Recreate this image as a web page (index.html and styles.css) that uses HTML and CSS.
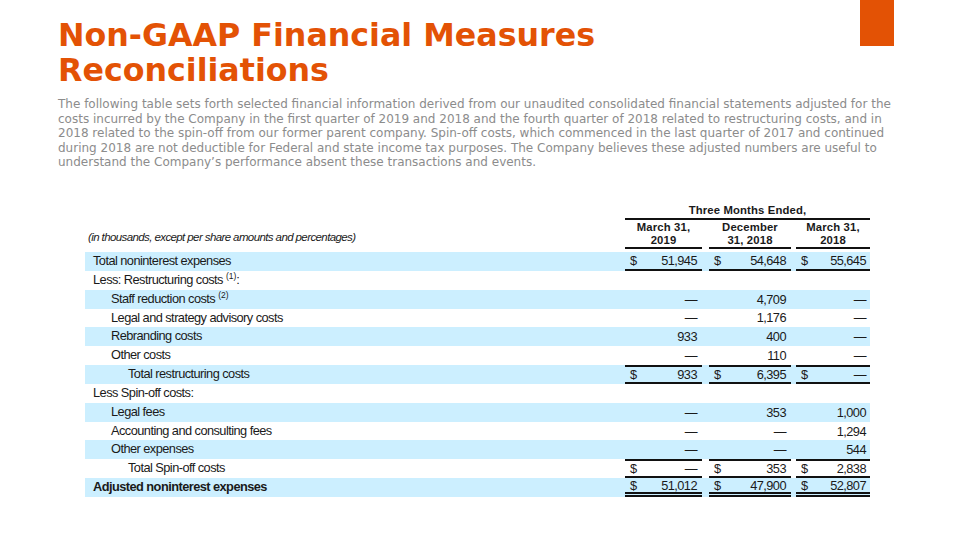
FILE: index.html
```html
<!DOCTYPE html>
<html lang="en">
<head>
<meta charset="utf-8">
<title>Non-GAAP Financial Measures Reconciliations</title>
<link rel="stylesheet" href="styles.css">
</head>
<body>
<div class="slide">
  <div class="accent"></div>
  <h1 class="title">Non-GAAP Financial Measures<br>Reconciliations</h1>
  <p class="intro">The following table sets forth selected financial information derived from our unaudited consolidated financial statements adjusted for the costs incurred by the Company in the first quarter of 2019 and 2018 and the fourth quarter of 2018 related to restructuring costs, and in 2018 related to the spin-off from our former parent company. Spin-off costs, which commenced in the last quarter of 2017 and continued during 2018 are not deductible for Federal and state income tax purposes. The Company believes these adjusted numbers are useful to understand the Company’s performance absent these transactions and events.</p>

  <div class="fin">
    <div class="head">
      <div class="units">(in thousands, except per share amounts and percentages)</div>
      <div class="period">
        <div class="period-title">Three Months Ended,</div>
        <div class="period-cols">
          <div class="ph c1">March 31,<br>2019</div>
          <div class="ph c2">December<br>31, 2018</div>
          <div class="ph c3">March 31,<br>2018</div>
        </div>
      </div>
    </div>

    <div class="row shade">
      <div class="lbl">Total noninterest expenses</div>
      <div class="val c1 bb"><span class="cur">$</span>51,945</div>
      <div class="val c2 bb"><span class="cur">$</span>54,648</div>
      <div class="val c3 bb"><span class="cur">$</span>55,645</div>
    </div>
    <div class="row">
      <div class="lbl">Less: Restructuring costs <sup>(1)</sup>:</div>
      <div class="val c1"></div><div class="val c2"></div><div class="val c3"></div>
    </div>
    <div class="row shade">
      <div class="lbl in1">Staff reduction costs <sup>(2)</sup></div>
      <div class="val c1">—</div>
      <div class="val c2">4,709</div>
      <div class="val c3">—</div>
    </div>
    <div class="row">
      <div class="lbl in1">Legal and strategy advisory costs</div>
      <div class="val c1">—</div>
      <div class="val c2">1,176</div>
      <div class="val c3">—</div>
    </div>
    <div class="row shade">
      <div class="lbl in1">Rebranding costs</div>
      <div class="val c1">933</div>
      <div class="val c2">400</div>
      <div class="val c3">—</div>
    </div>
    <div class="row">
      <div class="lbl in1">Other costs</div>
      <div class="val c1">—</div>
      <div class="val c2">110</div>
      <div class="val c3">—</div>
    </div>
    <div class="row shade">
      <div class="lbl in2">Total restructuring costs</div>
      <div class="val c1 bt bb"><span class="cur">$</span>933</div>
      <div class="val c2 bt bb"><span class="cur">$</span>6,395</div>
      <div class="val c3 bt bb"><span class="cur">$</span>—</div>
    </div>
    <div class="row">
      <div class="lbl">Less Spin-off costs:</div>
      <div class="val c1"></div><div class="val c2"></div><div class="val c3"></div>
    </div>
    <div class="row shade">
      <div class="lbl in1">Legal fees</div>
      <div class="val c1">—</div>
      <div class="val c2">353</div>
      <div class="val c3">1,000</div>
    </div>
    <div class="row">
      <div class="lbl in1">Accounting and consulting fees</div>
      <div class="val c1">—</div>
      <div class="val c2">—</div>
      <div class="val c3">1,294</div>
    </div>
    <div class="row shade">
      <div class="lbl in1">Other expenses</div>
      <div class="val c1">—</div>
      <div class="val c2">—</div>
      <div class="val c3">544</div>
    </div>
    <div class="row">
      <div class="lbl in2">Total Spin-off costs</div>
      <div class="val c1 bt bb"><span class="cur">$</span>—</div>
      <div class="val c2 bt bb"><span class="cur">$</span>353</div>
      <div class="val c3 bt bb"><span class="cur">$</span>2,838</div>
    </div>
    <div class="row shade">
      <div class="lbl strong">Adjusted noninterest expenses</div>
      <div class="val c1 dbl"><span class="cur">$</span>51,012</div>
      <div class="val c2 dbl"><span class="cur">$</span>47,900</div>
      <div class="val c3 dbl"><span class="cur">$</span>52,807</div>
    </div>
  </div>
</div>
</body>
</html>
```

FILE: styles.css
```css
* { box-sizing: border-box; }
html, body { margin: 0; padding: 0; background: #ffffff; }
.slide {
  position: relative;
  width: 960px;
  height: 540px;
  overflow: hidden;
  padding: 18px 0 0 58px;
  font-family: "DejaVu Sans", Verdana, sans-serif;
}
.accent {
  position: absolute;
  top: 0;
  left: 860px;
  width: 34px;
  height: 46px;
  background: #e35205;
}
.title {
  margin: 0;
  color: #e35205;
  font-size: 31.7px;
  line-height: 35px;
  font-weight: bold;
}
.intro {
  margin: 9px 0 0 0;
  width: 845px;
  color: #8c8c8c;
  font-size: 12px;
  line-height: 14.5px;
}

.fin {
  margin: 33.5px 0 0 27px;
  width: 785px;
  font-family: "Liberation Sans", Arial, sans-serif;
  font-size: 12.8px;
  letter-spacing: -0.55px;
  color: #1a1a1a;
}
.head {
  display: flex;
  align-items: flex-end;
  padding-bottom: 3px;
}
.units {
  flex: 1;
  font-style: italic;
  font-size: 11.5px;
  letter-spacing: -0.6px;
  line-height: 14px;
  padding: 0 0 5px 3px;
}
.period {
  width: 245px;
  font-weight: bold;
  font-size: 11.3px;
  letter-spacing: 0.15px;
  text-align: center;
}
.period-title {
  line-height: 14px;
  border-bottom: 2px solid #111;
  padding-bottom: 1px;
}
.period-cols {
  display: flex;
  padding-top: 1px;
}
.ph {
  line-height: 13px;
  border-bottom: 2px solid #111;
}

.row {
  display: flex;
  height: 18.85px;
  align-items: stretch;
}
.row.shade { background: #ccefff; }
.lbl {
  flex: 1;
  padding-left: 8px;
  line-height: 18.85px;
  white-space: nowrap;
}
.lbl.in1 { padding-left: 26px; }
.lbl.in2 { padding-left: 43px; }
.lbl.strong { font-weight: bold; }
sup { font-size: 8.5px; letter-spacing: 0; vertical-align: 5px; line-height: 0; }

.c1 { width: 77px; }
.c2 { width: 82px; margin-left: 7px; }
.c3 { width: 74px; margin-left: 5px; }

.val {
  display: flex;
  align-items: center;
  justify-content: flex-end;
  padding: 0 5px;
  white-space: nowrap;
}
.c3.val { padding-right: 4px; }
.cur { margin-right: auto; }
.bb { border-bottom: 2px solid #111; }
.bt { border-top: 2px solid #111; }
.dbl { border-bottom: 5px double #111; }
```
